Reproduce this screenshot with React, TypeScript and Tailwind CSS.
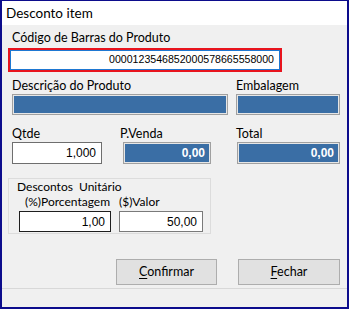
import React from 'react';

const ui = { fontFamily: 'Lato, "Noto Sans", sans-serif' };
const num = { fontFamily: '"Liberation Sans", Arial, sans-serif' };

function Label({ children, className = '' }: { children: React.ReactNode; className?: string }) {
  return <div className={`h-[16px] text-[12.5px] leading-[16px] text-black ${className}`}>{children}</div>;
}

function BlueField({ value, className = '' }: { value?: string; className?: string }) {
  return (
    <div
      style={num}
      className={`flex items-center justify-end bg-[#3a6ea5] border border-[#a0a0a0] shadow-[inset_0_0_0_1px_#e6e6e6] pr-[5px] text-[12px] font-bold text-white ${className}`}
    >
      {value}
    </div>
  );
}

function WhiteField({ value, className = '' }: { value: string; className?: string }) {
  return (
    <div style={num} className={`flex items-center justify-end bg-white pr-[5px] text-[12px] text-black ${className}`}>
      {value}
    </div>
  );
}

export default function App() {
  return (
    <div style={ui} className="w-[349px] h-[309px] flex flex-col border-x-2 border-b-2 border-t border-[#0c0c8c] bg-[#f0f0f0] overflow-hidden">
      <div className="h-[24px] bg-white pl-[4px] text-[13.5px] leading-[24px] text-black">Desconto item</div>

      <Label className="mt-[5px] ml-[10px]">Código de Barras do Produto</Label>
      <div className="mt-[2px] ml-[6px] w-[274px] h-[24px] border-2 border-[#e8141e] p-0">
        <div style={num} className="h-full border border-[#1e78d2] bg-white flex items-center justify-end pr-[5px] text-[10.6px] text-black">
          0000123546852000578665558000
        </div>
      </div>

      <div className="mt-[6px] flex">
        <div className="ml-[10px] w-[216px]">
          <Label>Descrição do Produto</Label>
          <BlueField className="h-[21px]" />
        </div>
        <div className="ml-[8px] w-[104px]">
          <Label>Embalagem</Label>
          <BlueField className="h-[21px]" />
        </div>
      </div>

      <div className="mt-[11px] flex">
        <div className="ml-[10px] w-[90px]">
          <Label>Qtde</Label>
          <WhiteField value="1,000" className="h-[22px] border border-[#6e6e6e]" />
        </div>
        <div className="ml-[18px] w-[91px]">
          <Label>P.Venda</Label>
          <BlueField value="0,00" className="ml-[3px] w-[88px] h-[22px]" />
        </div>
        <div className="ml-[25px] w-[104px]">
          <Label>Total</Label>
          <BlueField value="0,00" className="ml-[1px] w-[103px] h-[22px]" />
        </div>
      </div>

      <div className="mt-[14px] ml-[6px] w-[203px] h-[56px] border border-[#dcdcdc] pl-[8px]">
        <div className="mt-[1px] h-[14px] text-[12px] leading-[14px] text-black">Descontos&nbsp; Unitário</div>
        <div className="mt-[1px] flex h-[14px] text-[12px] leading-[14px] text-black">
          <span className="ml-[8px] w-[94px]">(%)Porcentagem</span>
          <span>($)Valor</span>
        </div>
        <div className="mt-[2px] flex">
          <WhiteField value="1,00" className="ml-[2px] w-[92px] h-[21px] border border-[#1e1e1e]" />
          <WhiteField value="50,00" className="ml-[8px] w-[84px] h-[21px] border border-[#7a7a7a]" />
        </div>
      </div>

      <div className="mt-[25px] flex text-[12.5px] text-black">
        <button className="ml-[114px] w-[101px] h-[26px] bg-[#e1e1e1] border border-[#adadad]">
          <span className="underline underline-offset-2">C</span>onfirmar
        </button>
        <button className="ml-[21px] w-[102px] h-[26px] bg-[#e1e1e1] border border-[#adadad]">
          <span className="underline underline-offset-2">F</span>echar
        </button>
      </div>

      <div className="mt-[3px] h-px bg-[#d8d8d8]" />
    </div>
  );
}
